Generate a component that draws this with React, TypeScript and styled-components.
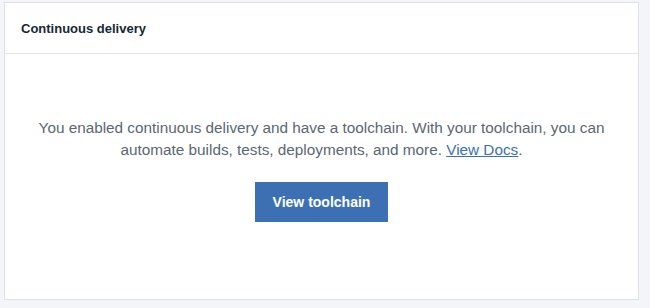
import React from 'react';
import styled, {createGlobalStyle} from 'styled-components';

const GlobalStyle = createGlobalStyle`
  html, body {
    margin: 0;
    padding: 0;
    background: #f4f5f9;
    font-family: "Liberation Sans", Arial, sans-serif;
  }
`;

const Page = styled.div`
  width: 650px;
  height: 308px;
  padding: 2px 0 0 4px;
  box-sizing: border-box;
`;

const Card = styled.section`
  width: 635px;
  height: 298px;
  box-sizing: border-box;
  background: #ffffff;
  border: 1px solid #dde2e8;
  display: flex;
  flex-direction: column;
`;

const Header = styled.header`
  height: 50px;
  display: flex;
  align-items: center;
  padding: 0 16px;
  border-bottom: 1px solid #e3e6ea;
  flex-shrink: 0;
`;

const Title = styled.h2`
  margin: 0;
  font-size: 13px;
  font-weight: 700;
  color: #152935;
`;

const Body = styled.div`
  flex: 1;
  display: flex;
  flex-direction: column;
  align-items: center;
  padding-top: 63px;
`;

const Message = styled.p`
  margin: 0;
  width: 600px;
  text-align: center;
  font-size: 15.3px;
  line-height: 22px;
  color: #5a6872;
`;

const Link = styled.a`
  color: #3d70b2;
  text-decoration: underline;
`;

const Button = styled.button`
  margin-top: 21px;
  width: 133px;
  height: 40px;
  border: none;
  background: #3d70b2;
  color: #ffffff;
  font-family: inherit;
  font-size: 14px;
  font-weight: 700;
  cursor: pointer;
`;

const App: React.FC = () => {
    return (
        <>
            <GlobalStyle/>
            <Page>
                <Card>
                    <Header>
                        <Title>Continuous delivery</Title>
                    </Header>
                    <Body>
                        <Message>
                            You enabled continuous delivery and have a toolchain. With your toolchain, you can
                            automate builds, tests, deployments, and more. <Link href="#">View Docs</Link>.
                        </Message>
                        <Button>View toolchain</Button>
                    </Body>
                </Card>
            </Page>
        </>
    );
};

export default App;
